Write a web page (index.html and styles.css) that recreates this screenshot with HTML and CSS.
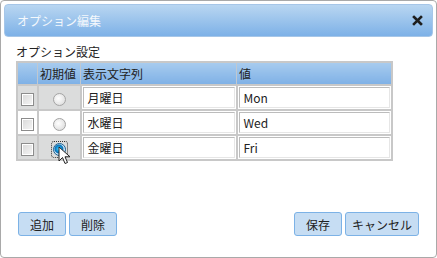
FILE: index.html
```html
<!DOCTYPE html>
<html lang="ja">
<head>
    <meta charset="UTF-8">
    <link rel="stylesheet" href="styles.css">
</head>
<body>
    <div class="dialog">
        <div class="dialog-header">
            <span class="dialog-title">オプション編集</span>
            <svg class="close" width="11" height="11" viewBox="0 0 11 11">
                <path d="M2 2 L9 9 M9 2 L2 9" stroke="#1e1e1e" stroke-width="2.6" stroke-linecap="square"/>
            </svg>
        </div>
        <div class="dialog-body">
            <div class="section-label">オプション設定</div>
            <table class="option-table">
                <thead>
                    <tr>
                        <th class="col-check"></th>
                        <th class="col-default">初期値</th>
                        <th class="col-text">表示文字列</th>
                        <th class="col-value">値</th>
                    </tr>
                </thead>
                <tbody>
                    <tr class="shaded">
                        <td class="center"><span class="checkbox"></span></td>
                        <td class="center"><span class="radio"></span></td>
                        <td><div class="cell-input">月曜日</div></td>
                        <td><div class="cell-input">Mon</div></td>
                    </tr>
                    <tr>
                        <td class="center"><span class="checkbox"></span></td>
                        <td class="center"><span class="radio"></span></td>
                        <td><div class="cell-input">水曜日</div></td>
                        <td><div class="cell-input">Wed</div></td>
                    </tr>
                    <tr class="shaded">
                        <td class="center"><span class="checkbox"></span></td>
                        <td class="center">
                            <span class="radio-focus"><span class="radio checked"></span></span>
                            <svg class="cursor" width="14" height="20" viewBox="0 0 14 20">
                                <path d="M1 1 L1 15 L4.5 11.5 L7 17.5 L9.5 16.5 L7 10.8 L12 10.8 Z" fill="#fff" stroke="#222" stroke-width="1"/>
                            </svg>
                        </td>
                        <td><div class="cell-input">金曜日</div></td>
                        <td><div class="cell-input">Fri</div></td>
                    </tr>
                </tbody>
            </table>
        </div>
        <div class="dialog-buttons">
            <div class="btn-group">
                <button class="btn">追加</button>
                <button class="btn">削除</button>
            </div>
            <div class="btn-group">
                <button class="btn">保存</button>
                <button class="btn">キャンセル</button>
            </div>
        </div>
    </div>
</body>
</html>
```

FILE: styles.css
```css
body {
    margin: 0;
    font-family: "Noto Sans CJK JP", "Liberation Sans", sans-serif;
    font-size: 12px;
    color: #222;
    background: #fff;
}

.dialog {
    width: 437px;
    height: 258px;
    box-sizing: border-box;
    border: 1px solid #a9a9a9;
    border-radius: 4px;
    padding: 3px;
    display: flex;
    flex-direction: column;
}

.dialog-header {
    height: 33px;
    box-sizing: border-box;
    border: 1px solid #a6c6e8;
    border-radius: 4px;
    background: linear-gradient(#b9d6f1, #7db1e7);
    display: flex;
    align-items: center;
    justify-content: space-between;
    padding: 0 9px 0 12px;
}

.dialog-title {
    color: #f4f8fc;
    font-size: 12px;
}

.dialog-body {
    padding: 0 12px;
    flex: 1;
}

.section-label {
    font-size: 12px;
    margin-top: 5px;
    height: 19px;
    line-height: 20px;
}

.option-table {
    border-collapse: collapse;
    table-layout: fixed;
    width: 377px;
    border: 2px solid #c8c8c8;
}

.option-table th {
    height: 21px;
    padding: 0 2px;
    text-align: left;
    font-weight: normal;
    font-size: 12px;
    white-space: nowrap;
    background: linear-gradient(#a7cbee, #7fb1e6);
    border: 1px solid #c0c8d0;
}

.option-table td {
    height: 21px;
    padding: 0;
    border: 2px solid #c8c8c8;
    background: #fff;
}

.col-check { width: 15px; }
.col-default { width: 38px; }
.col-text { width: 151px; }

.option-table tr.shaded td.center {
    background: #dbdcdc;
}

.center {
    text-align: center;
    position: relative;
}

.cell-input {
    margin: 1px;
    height: 19px;
    line-height: 19px;
    border: 1px solid #e6e6e6;
    border-top-color: #bcbcbc;
    border-left-color: #bcbcbc;
    padding: 0 4px;
    font-size: 12px;
    background: #fff;
}

.checkbox {
    display: inline-block;
    width: 11px;
    height: 11px;
    border: 1px solid #8c8c8c;
    background: linear-gradient(135deg, #d8d8d8, #f6f6f6);
    box-shadow: inset 0 0 0 1px #fff;
    vertical-align: middle;
}

.radio {
    display: inline-block;
    width: 11px;
    height: 11px;
    border-radius: 50%;
    border: 1px solid #a4a4a4;
    background: radial-gradient(circle at 40% 40%, #fff, #d6d6d6);
    vertical-align: middle;
}

.radio.checked {
    border-color: #1d5f8f;
    background: radial-gradient(circle at 45% 45%, #8fe1ff 0, #18a3e6 2px, #0b6fb3 4px, #cfe7f8 5px);
}

.radio-focus {
    display: inline-block;
    padding: 1px;
    outline: 1px dotted #333;
    border-radius: 2px;
    vertical-align: middle;
    line-height: 0;
}

.cursor {
    position: absolute;
    left: 19px;
    top: 10px;
}

.dialog-buttons {
    display: flex;
    justify-content: space-between;
    padding: 0 14px 18px;
}

.btn-group {
    display: flex;
    gap: 3px;
}

.btn {
    height: 24px;
    min-width: 48px;
    padding: 0 6px;
    font-family: inherit;
    font-size: 12px;
    color: #222;
    background: #c6ddf3;
    border: 1px solid #7cb2e6;
    border-radius: 3px;
}
```
